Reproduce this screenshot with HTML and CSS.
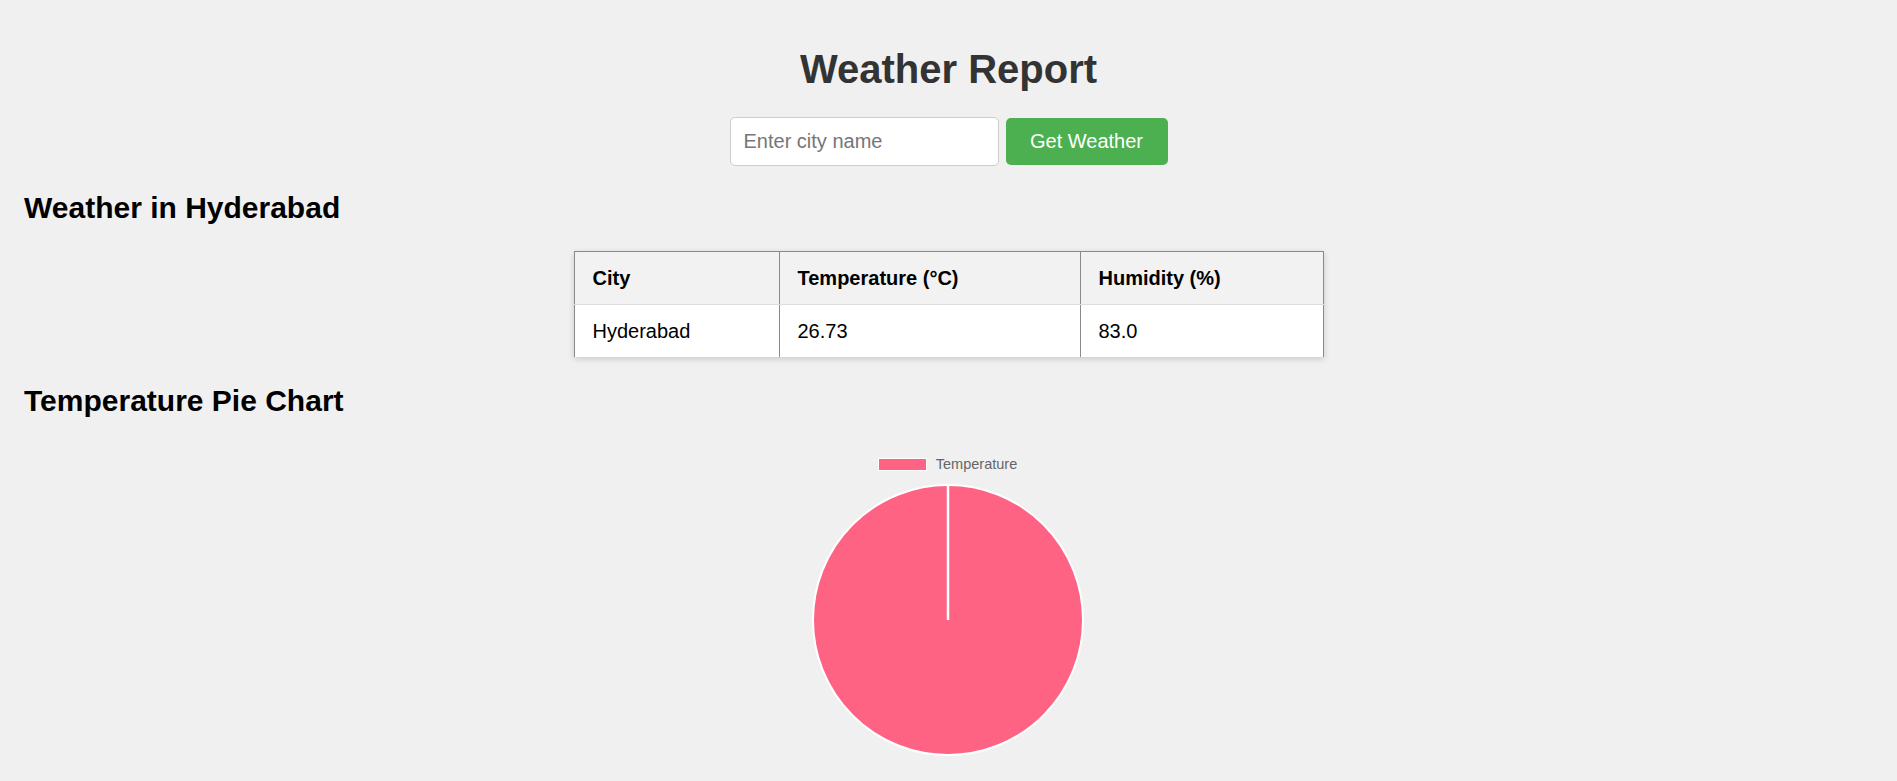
FILE: index.html
```html
<!DOCTYPE html>
<html lang="en">
<head>
<meta charset="utf-8">
<title>Weather Report</title>
<link rel="stylesheet" href="styles.css">
</head>
<body>
<div class="page">
  <h1 class="title">Weather Report</h1>
  <form class="search" onsubmit="return false;">
    <input class="search-input" type="text" placeholder="Enter city name">
    <button class="search-btn" type="submit">Get Weather</button>
  </form>

  <h2 class="section-title section-title--first">Weather in Hyderabad</h2>
  <table class="weather-table">
    <thead>
      <tr>
        <th class="col-city">City</th>
        <th class="col-temp">Temperature (°C)</th>
        <th class="col-hum">Humidity (%)</th>
      </tr>
    </thead>
    <tbody>
      <tr>
        <td>Hyderabad</td>
        <td>26.73</td>
        <td>83.0</td>
      </tr>
    </tbody>
  </table>

  <h2 class="section-title section-title--chart">Temperature Pie Chart</h2>
  <div class="chart">
    <div class="legend">
      <span class="legend-box"></span>
      <span class="legend-label">Temperature</span>
    </div>
    <svg class="pie" width="280" height="280" viewBox="0 0 280 280">
      <circle cx="140" cy="140" r="135" fill="#ff6384" stroke="#ffffff" stroke-width="2"/>
      <line x1="140" y1="140" x2="140" y2="4" stroke="#ffffff" stroke-width="2.5"/>
    </svg>
  </div>
</div>
</body>
</html>
```

FILE: styles.css
```css
html, body {
  margin: 0;
  padding: 0;
}

body {
  background: #f0f0f0;
  font-family: "Liberation Sans", Arial, Helvetica, sans-serif;
  color: #000;
}

.page {
  padding: 46px 22px 0 24px;
}

.title {
  margin: 0 0 0 -2px;
  font-size: 40px;
  line-height: 46px;
  font-weight: bold;
  color: #333;
  text-align: center;
}

.search {
  margin: 25px 0 0 -2px;
  display: flex;
  justify-content: center;
  align-items: center;
  gap: 7px;
}

.search-input {
  box-sizing: border-box;
  width: 269px;
  height: 49px;
  padding: 12px 13px;
  border: 1px solid #cccccc;
  border-radius: 5px;
  background: #fff;
  font-family: "Liberation Sans", Arial, sans-serif;
  font-size: 20px;
  line-height: 23px;
  color: #333;
  outline: none;
}

.search-input::placeholder {
  color: #767676;
}

.search-btn {
  box-sizing: border-box;
  width: 162px;
  height: 47px;
  padding: 0;
  border: none;
  border-radius: 5px;
  background: #4caf50;
  color: #fff;
  font-family: "Liberation Sans", Arial, sans-serif;
  font-size: 20px;
  cursor: pointer;
}

.section-title {
  margin: 0;
  font-size: 30px;
  line-height: 35px;
  font-weight: bold;
  color: #000;
}

.section-title--first {
  margin-top: 24px;
}

.section-title--chart {
  margin-top: 26px;
}

.weather-table {
  margin: 26px auto 0 auto;
  position: relative;
  left: -1px;
  width: 750px;
  border-collapse: collapse;
  background: #fff;
  box-shadow: 0 2px 6px rgba(0, 0, 0, 0.16);
  border-top: 1px solid #8a8a8a;
  border-left: 1px solid #8a8a8a;
  border-right: 1px solid #8a8a8a;
  font-size: 20px;
  line-height: 22px;
}

.weather-table th,
.weather-table td {
  padding: 15px 18px;
  text-align: left;
  border-left: 1px solid #8a8a8a;
  border-right: 1px solid #8a8a8a;
}

.weather-table th {
  background: #f2f2f2;
  font-weight: bold;
  border-bottom: 1px solid #dddddd;
}

.weather-table td {
  background: #ffffff;
  font-weight: normal;
}

.col-city { width: 168px; }
.col-temp { width: 264px; }
.col-hum { width: auto; }

.chart {
  margin: 39px 0 0 -4px;
  display: flex;
  flex-direction: column;
  align-items: center;
}

.legend {
  display: flex;
  align-items: center;
  height: 14px;
  gap: 9px;
}

.legend-box {
  box-sizing: border-box;
  width: 49px;
  height: 13px;
  background: #ff6384;
  border: 1px solid #ffffff;
}

.legend-label {
  font-size: 14.5px;
  line-height: 14px;
  color: #666666;
}

.pie {
  display: block;
  margin-top: 9px;
}
```
